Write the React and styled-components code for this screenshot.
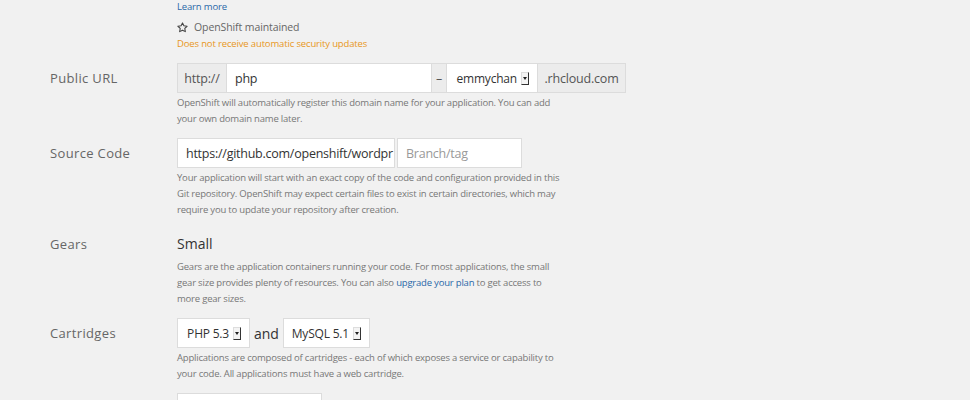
import React from "react";
import styled, { createGlobalStyle } from "styled-components";

const Global = createGlobalStyle`
  html, body { margin: 0; padding: 0; background: #f1f1f1; }
  body { font-family: "Open Sans", "Liberation Sans", sans-serif; color: #333; overflow: hidden; }
`;

const Page = styled.div`
  padding: 0 0 0 50px;
  margin-top: -1px;
`;

const Row = styled.div`
  display: grid;
  grid-template-columns: 127px 1fr;
  margin-bottom: 11px;
`;

const Label = styled.div`
  font-size: 13px;
  letter-spacing: 0.35px;
  color: #666;
  height: 30px;
  line-height: 30px;
`;

const Field = styled.div`
  display: flex;
  flex-direction: column;
  align-items: flex-start;
`;

const Controls = styled.div`
  display: flex;
  align-items: stretch;
  height: 30px;
  gap: ${(p) => p.$gap || 0}px;
`;

const Help = styled.div`
  margin-top: 2px;
  font-size: 9.5px;
  letter-spacing: -0.2px;
  line-height: 16px;
  color: #777;
  white-space: nowrap;
`;

const Link = styled.a`
  color: #2a68a8;
  text-decoration: none;
`;

const Small = styled.div`
  font-size: 9.5px;
  letter-spacing: -0.15px;
  line-height: 16px;
  color: ${(p) => p.$color || "#777"};
  margin-top: ${(p) => p.$mt || 0}px;
  display: flex;
  align-items: center;
`;

const Maint = styled(Small)`
  font-size: 10.5px;
  letter-spacing: -0.1px;
  color: #666;
  gap: 6px;
`;

const Addon = styled.div`
  box-sizing: border-box;
  width: ${(p) => p.$w}px;
  background: #ececec;
  border: 1px solid #dcdcdc;
  border-left-width: ${(p) => (p.$noLeft ? 0 : 1)}px;
  display: flex;
  align-items: center;
  justify-content: center;
  font-size: 12.5px;
  letter-spacing: -0.2px;
  color: #555;
`;

const Input = styled.div`
  box-sizing: border-box;
  width: ${(p) => p.$w}px;
  background: #fff;
  border: 1px solid #dcdcdc;
  border-left-width: ${(p) => (p.$noLeft ? 0 : 1)}px;
  display: flex;
  align-items: center;
  padding: 0 8px;
  font-size: 12.5px;
  letter-spacing: -0.25px;
  color: ${(p) => (p.$placeholder ? "#999" : "#333")};
  white-space: nowrap;
  overflow: hidden;
`;

const Select = styled.div`
  box-sizing: border-box;
  width: ${(p) => p.$w}px;
  background: #fff;
  border: 1px solid #dcdcdc;
  border-left-width: ${(p) => (p.$noLeft ? 0 : 1)}px;
  display: flex;
  align-items: center;
  justify-content: flex-end;
  gap: 4px;
  padding: 0 8px 0 6px;
  font-size: 12px;
  letter-spacing: -0.2px;
  color: #333;
  white-space: nowrap;
`;

const Arrow = styled.span`
  box-sizing: border-box;
  width: 8px;
  height: 13px;
  background: #f4f4f4;
  border-right: 1px solid #333;
  border-bottom: 1px solid #333;
  border-top: 1px solid #ddd;
  border-left: 1px solid #ddd;
  display: flex;
  align-items: center;
  justify-content: center;
  &::after {
    content: "";
    border-left: 2px solid transparent;
    border-right: 2px solid transparent;
    border-top: 3px solid #222;
  }
`;

const Static = styled.div`
  height: 30px;
  line-height: 30px;
  font-size: 14px;
  color: #333;
  margin-bottom: -2px;
`;

const And = styled.span`
  display: flex;
  align-items: center;
  font-size: 14px;
  color: #333;
  padding: 0 4px;
`;

const Box = styled.div`
  box-sizing: border-box;
  width: 145px;
  height: 30px;
  background: #fff;
  border: 1px solid #dcdcdc;
`;

const Star = () => (
  <svg width="11" height="11" viewBox="0 0 24 24" fill="none" stroke="#444" strokeWidth="2.4" strokeLinejoin="round">
    <polygon points="12 2 15.09 8.26 22 9.27 17 14.14 18.18 21.02 12 17.77 5.82 21.02 7 14.14 2 9.27 8.91 8.26 12 2" />
  </svg>
);

export default function App() {
  return (
    <>
      <Global />
      <Page>
        <Row>
          <div />
          <Field>
            <Small><Link href="#">Learn more</Link></Small>
            <Maint $mt={4}><Star />OpenShift maintained</Maint>
            <Small $mt={1} $color="#e8971c">Does not receive automatic security updates</Small>
          </Field>
        </Row>

        <Row>
          <Label>Public URL</Label>
          <Field>
            <Controls>
              <Addon $w={50}>http://</Addon>
              <Input $w={205} $noLeft>php</Input>
              <Addon $w={15} $noLeft>–</Addon>
              <Select $w={91} $noLeft>emmychan <Arrow /></Select>
              <Addon $w={88} $noLeft>.rhcloud.com</Addon>
            </Controls>
            <Help>
              OpenShift will automatically register this domain name for your application. You can add
              <br />
              your own domain name later.
            </Help>
          </Field>
        </Row>

        <Row>
          <Label>Source Code</Label>
          <Field>
            <Controls $gap={2}>
              <Input $w={218}>https://github.com/openshift/wordpr</Input>
              <Input $w={125} $placeholder>Branch/tag</Input>
            </Controls>
            <Help>
              Your application will start with an exact copy of the code and configuration provided in this
              <br />
              Git repository. OpenShift may expect certain files to exist in certain directories, which may
              <br />
              require you to update your repository after creation.
            </Help>
          </Field>
        </Row>

        <Row>
          <Label>Gears</Label>
          <Field>
            <Static>Small</Static>
            <Help>
              Gears are the application containers running your code. For most applications, the small
              <br />
              gear size provides plenty of resources. You can also <Link href="#">upgrade your plan</Link> to get access to
              <br />
              more gear sizes.
            </Help>
          </Field>
        </Row>

        <Row>
          <Label>Cartridges</Label>
          <Field>
            <Controls>
              <Select $w={73}>PHP 5.3 <Arrow /></Select>
              <And>and</And>
              <Select $w={87}>MySQL 5.1 <Arrow /></Select>
            </Controls>
            <Help>
              Applications are composed of cartridges - each of which exposes a service or capability to
              <br />
              your code. All applications must have a web cartridge.
            </Help>
          </Field>
        </Row>

        <Row>
          <div />
          <Field>
            <Box />
          </Field>
        </Row>
      </Page>
    </>
  );
}
